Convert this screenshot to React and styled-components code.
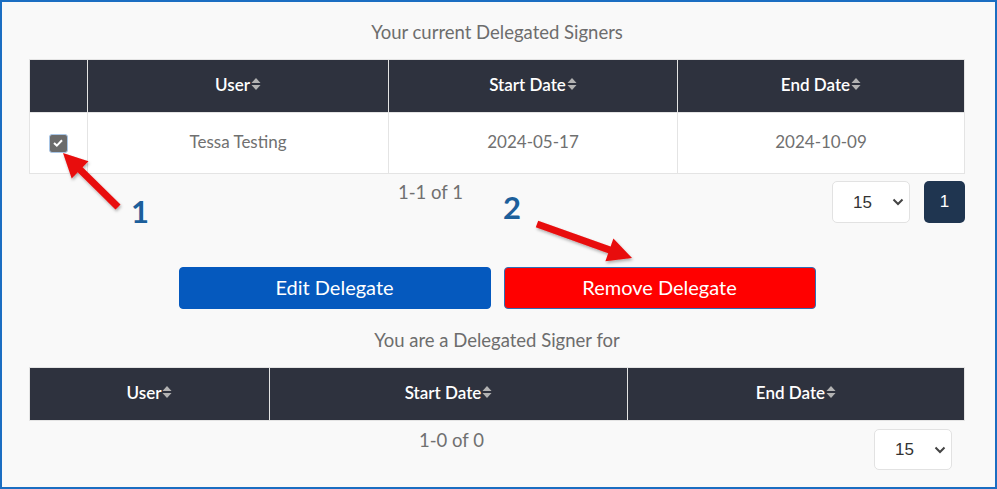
import styled, { createGlobalStyle } from "styled-components";

const GlobalStyle = createGlobalStyle`
    html, body {
        margin: 0;
        padding: 0;
        background: #ffffff;
    }

    body {
        font-family: Lato, "Open Sans", sans-serif;
    }
`;

const Frame = styled.div`
    position: relative;
    box-sizing: border-box;
    width: 997px;
    height: 489px;
    padding: 18px 30px 0 27px;
    border: 2px solid #1b6ec2;
    background: #f9f9f9;
    overflow: hidden;
`;

const Caption = styled.h3`
    margin: 0 0 15px;
    font-size: 18.5px;
    font-weight: 400;
    line-height: 24px;
    text-align: center;
    color: #6d6d6d;
`;

const Table = styled.table`
    width: 100%;
    table-layout: fixed;
    border-collapse: collapse;

    th {
        height: 48px;
        padding: 0 0 4px;
        background: #2e323e;
        border: 1px solid #e4e4e4;
        color: #ffffff;
        font-size: 17px;
        font-weight: 600;
        text-align: center;
    }

    td {
        height: 57px;
        padding: 0 0 3px;
        background: #ffffff;
        border: 1px solid #e4e4e4;
        color: #707070;
        font-size: 17px;
        text-align: center;
    }
`;

const HeadLabel = styled.span`
    display: inline-flex;
    align-items: center;
    gap: 1px;
`;

const Check = styled.span`
    display: inline-flex;
    align-items: center;
    justify-content: center;
    box-sizing: border-box;
    width: 19px;
    height: 19px;
    margin-left: -1px;
    border: 1px solid #a9c6e6;
    border-radius: 3px;
    background: #6b6b6b;
    vertical-align: middle;
`;

const Pager = styled.div`
    display: flex;
    justify-content: space-between;
    align-items: flex-start;
    margin-top: ${(p) => p.$top}px;
`;

const Count = styled.span`
    font-size: 18.5px;
    line-height: 22px;
    color: #707070;
`;

const Controls = styled.div`
    display: flex;
    gap: 14px;
    margin-right: ${(p) => p.$right || 0}px;
`;

const SelectWrap = styled.div`
    position: relative;
    width: 78px;
    height: ${(p) => p.$h}px;

    svg {
        position: absolute;
        right: 6px;
        top: 50%;
        margin-top: -4px;
        pointer-events: none;
    }
`;

const Select = styled.select`
    appearance: none;
    box-sizing: border-box;
    width: 100%;
    height: 100%;
    padding: 0 0 0 20px;
    border: 1px solid #e2e2e2;
    border-radius: 5px;
    background: #ffffff;
    color: #333333;
    font-family: "Liberation Sans", Arial, sans-serif;
    font-size: 17px;
`;

const PageButton = styled.button`
    width: 41px;
    height: 42px;
    border: none;
    border-radius: 5px;
    background: #1f3550;
    color: #ffffff;
    font-family: "Liberation Sans", Arial, sans-serif;
    font-size: 17px;
`;

const Actions = styled.div`
    display: flex;
    justify-content: center;
    gap: 13px;
    margin: 44px 0 19px;
`;

const Action = styled.button`
    box-sizing: border-box;
    width: 312px;
    height: 42px;
    padding: 0 0 3px;
    border: 1px solid ${(p) => (p.$danger ? "#2f6fb5" : "#0559be")};
    border-radius: 4px;
    background: ${(p) => (p.$danger ? "#ff0000" : "#0559be")};
    color: #ffffff;
    font-family: Lato, sans-serif;
    font-size: 20px;
`;

const Marker = styled.span`
    position: absolute;
    left: ${(p) => p.$x}px;
    top: ${(p) => p.$y}px;
    font-size: 31px;
    font-weight: 700;
    line-height: 1;
    color: #1c5f9b;
`;

const Overlay = styled.svg`
    position: absolute;
    left: 0;
    top: 0;
    pointer-events: none;
`;

const SortIcon = () => (
    <svg width="10" height="14" viewBox="0 0 10 14">
        <path d="M0.5 6 L5 1 L9.5 6 Z" fill="#b3b3b3" />
        <path d="M0.5 8 L5 13 L9.5 8 Z" fill="#b3b3b3" />
    </svg>
);

const Chevron = () => (
    <svg width="12" height="8" viewBox="0 0 12 8">
        <path d="M1.5 1.5 L6 6 L10.5 1.5" fill="none" stroke="#444" strokeWidth="2" />
    </svg>
);

// arrow polygon from tail to tip
const arrowPoints = (tx, ty, px, py, shaft = 7, headLen = 24, headW = 24) => {
    const dx = px - tx;
    const dy = py - ty;
    const len = Math.hypot(dx, dy);
    const ux = dx / len;
    const uy = dy / len;
    const nx = -uy;
    const ny = ux;
    const bx = px - ux * headLen;
    const by = py - uy * headLen;
    const pts = [
        [tx + nx * shaft / 2, ty + ny * shaft / 2],
        [bx + nx * shaft / 2, by + ny * shaft / 2],
        [bx + nx * headW / 2, by + ny * headW / 2],
        [px, py],
        [bx - nx * headW / 2, by - ny * headW / 2],
        [bx - nx * shaft / 2, by - ny * shaft / 2],
        [tx - nx * shaft / 2, ty - ny * shaft / 2],
    ];
    return pts.map((p) => p.map((v) => v.toFixed(1)).join(",")).join(" ");
};

const Head = ({ label }) => (
    <th>
        <HeadLabel>
            {label}
            <SortIcon />
        </HeadLabel>
    </th>
);

const App = () => {
    return (
        <Frame>
            <GlobalStyle />
            <Caption>Your current Delegated Signers</Caption>
            <Table>
                <colgroup>
                    <col style={{ width: 58 }} />
                    <col style={{ width: 301 }} />
                    <col style={{ width: 289 }} />
                    <col />
                </colgroup>
                <thead>
                    <tr>
                        <th></th>
                        <Head label="User" />
                        <Head label="Start Date" />
                        <Head label="End Date" />
                    </tr>
                </thead>
                <tbody>
                    <tr>
                        <td>
                            <Check>
                                <svg width="10" height="8" viewBox="0 0 10 8">
                                    <path d="M1 4 L3.8 6.6 L9 1.2" fill="none" stroke="#fff" strokeWidth="2" />
                                </svg>
                            </Check>
                        </td>
                        <td>Tessa Testing</td>
                        <td>2024-05-17</td>
                        <td>2024-10-09</td>
                    </tr>
                </tbody>
            </Table>
            <Pager $top={7}>
                <span />
                <Count>1-1 of 1</Count>
                <Controls>
                    <SelectWrap $h={42}>
                        <Select defaultValue="15">
                            <option>15</option>
                        </Select>
                        <Chevron />
                    </SelectWrap>
                    <PageButton>1</PageButton>
                </Controls>
            </Pager>

            <Actions>
                <Action>Edit Delegate</Action>
                <Action $danger>Remove Delegate</Action>
            </Actions>

            <Caption>You are a Delegated Signer for</Caption>
            <Table>
                <colgroup>
                    <col style={{ width: 240 }} />
                    <col style={{ width: 358 }} />
                    <col />
                </colgroup>
                <thead>
                    <tr>
                        <Head label="User" />
                        <Head label="Start Date" />
                        <Head label="End Date" />
                    </tr>
                </thead>
            </Table>
            <Pager $top={8}>
                <span />
                <Count>1-0 of 0</Count>
                <Controls $right={13}>
                    <SelectWrap $h={41}>
                        <Select defaultValue="15">
                            <option>15</option>
                        </Select>
                        <Chevron />
                    </SelectWrap>
                </Controls>
            </Pager>

            <Overlay width="997" height="489">
                <defs>
                    <filter id="shadow" x="-20%" y="-20%" width="140%" height="140%">
                        <feDropShadow dx="1" dy="2" stdDeviation="1.5" floodColor="#000" floodOpacity="0.3" />
                    </filter>
                </defs>
                <polygon points={arrowPoints(116, 205, 61, 151)} fill="#e80b0b" filter="url(#shadow)" />
                <polygon points={arrowPoints(535, 222, 630, 256)} fill="#e80b0b" filter="url(#shadow)" />
            </Overlay>
            <Marker $x={129} $y={194}>1</Marker>
            <Marker $x={501} $y={190}>2</Marker>
        </Frame>
    );
};

export default App;
